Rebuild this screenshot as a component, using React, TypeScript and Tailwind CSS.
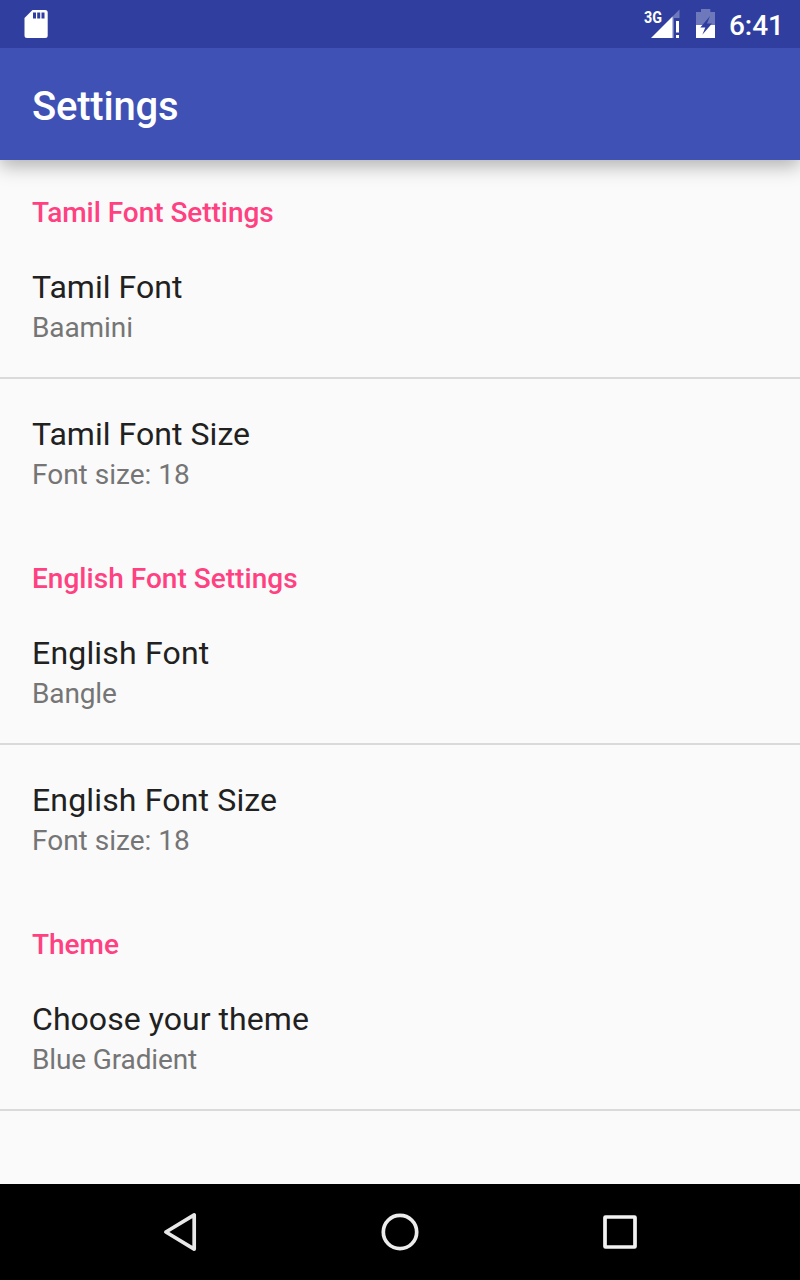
type Item = { title: string; titleTracking?: string; summary: string; summaryTracking?: string };
type Group = { heading: string; tracking?: string; items: Item[] };

const groups: Group[] = [
  {
    heading: "Tamil Font Settings",
    tracking: "tracking-[-0.04px]",
    items: [
      { title: "Tamil Font", titleTracking: "tracking-[0.05px]", summary: "Baamini", summaryTracking: "tracking-[-0.1px]" },
      { title: "Tamil Font Size", titleTracking: "tracking-[0.05px]", summary: "Font size: 18" },
    ],
  },
  {
    heading: "English Font Settings",
    tracking: "tracking-[0.03px]",
    items: [
      { title: "English Font", titleTracking: "tracking-[0.19px]", summary: "Bangle", summaryTracking: "tracking-[-0.15px]" },
      { title: "English Font Size", titleTracking: "tracking-[0.16px]", summary: "Font size: 18" },
    ],
  },
  {
    heading: "Theme",
    items: [
      { title: "Choose your theme", titleTracking: "tracking-[0.05px]", summary: "Blue Gradient", summaryTracking: "tracking-[-0.13px]" },
    ],
  },
];

function StatusBar() {
  return (
    <div className="relative z-10 flex h-12 items-center bg-[#303f9f] pl-6 pr-4 text-white">
      <svg width="24" height="30" viewBox="0 0 24 30">
        <path d="M8.500 1h12.700a2.500 2.500 0 0 1 2.500 2.500v23a2.500 2.500 0 0 1-2.500 2.500H3a2.500 2.500 0 0 1-2.500-2.500V9z" fill="#fff" />
        <path d="M9 3.500h3v6H9zM13.200 3.500h3v6h-3zM17.500 3.500h3v6h-3z" fill="#303f9f" />
      </svg>
      <div className="flex-1" />
      <svg width="80" height="48" viewBox="640 0 80 48">
        <text x="644" y="22.700" fontSize="17" fontWeight="700" fontFamily="Roboto, sans-serif" textLength="18" lengthAdjust="spacingAndGlyphs" fill="#fff">3G</text>
        <path d="M679.500 9.500V18H674v20h-2V17z" fill="#fff" fillOpacity=".3" />
        <path d="M651 38l21.500-21.500V38z" fill="#fff" />
        <path d="M676 21h3v11.500h-3zM676 35h3v3h-3z" fill="#fff" />
        <path d="M701 9h9.300v3h4.700v13h-19V12h5z" fill="#fff" fillOpacity=".3" />
        <path d="M696 25h19v13h-19z" fill="#fff" />
        <path d="M710 16l-9.700 11.500h5l-3 7.200L712 23.500h-5z" fill="#303f9f" />
      </svg>
      <span className="ml-[9px] pt-[3px] text-[28px] font-medium leading-none">6:41</span>
    </div>
  );
}

function NavBar() {
  return (
    <div className="flex h-24 items-center justify-center gap-[172px] bg-black">
      <svg width="48" height="48" viewBox="0 0 48 48" fill="none" stroke="#e8e8e8" strokeWidth="3.700" strokeLinejoin="round">
        <path d="M9.900 24 38.200 6.900v34.200z" />
      </svg>
      <svg width="48" height="48" viewBox="0 0 48 48" fill="none" stroke="#ececec" strokeWidth="3.700">
        <circle cx="24" cy="24" r="16.700" />
      </svg>
      <svg width="48" height="48" viewBox="0 0 48 48" fill="none" stroke="#f2f2f2" strokeWidth="3.700" strokeLinejoin="round">
        <rect x="9" y="9" width="30" height="30" rx=".5" />
      </svg>
    </div>
  );
}

export default function App() {
  return (
    <div className="flex h-[1280px] w-[800px] flex-col bg-[#fafafa] font-['Roboto',sans-serif]">
      <StatusBar />
      <header className="relative flex h-28 items-center bg-[#3f51b5] px-8 pt-1.5 shadow-[0_6px_18px_rgba(0,0,0,0.3)]">
        <h1 className="text-[40px] font-medium leading-[48px] tracking-[-0.22px] text-white">Settings</h1>
      </header>
      <main className="flex-1 overflow-hidden">
        {groups.map((group) => (
          <section key={group.heading}>
            <h2 className={`flex h-[72px] items-end px-8 pb-[3px] text-[28px] font-medium leading-8 text-[#ff4081] ${group.tracking ?? ""}`}>{group.heading}</h2>
            {group.items.map((item, i) => (
              <div key={item.title} className={`h-[147px] px-8 pt-9 ${i === 0 ? "border-b-2 border-[#dadada]" : ""}`}>
                <p className={`text-[32px] leading-[38px] text-[#212121] ${item.titleTracking ?? ""}`}>{item.title}</p>
                <p className={`mt-[5px] text-[28px] leading-[33px] text-[#757575] ${item.summaryTracking ?? ""}`}>{item.summary}</p>
              </div>
            ))}
          </section>
        ))}
      </main>
      <NavBar />
    </div>
  );
}
